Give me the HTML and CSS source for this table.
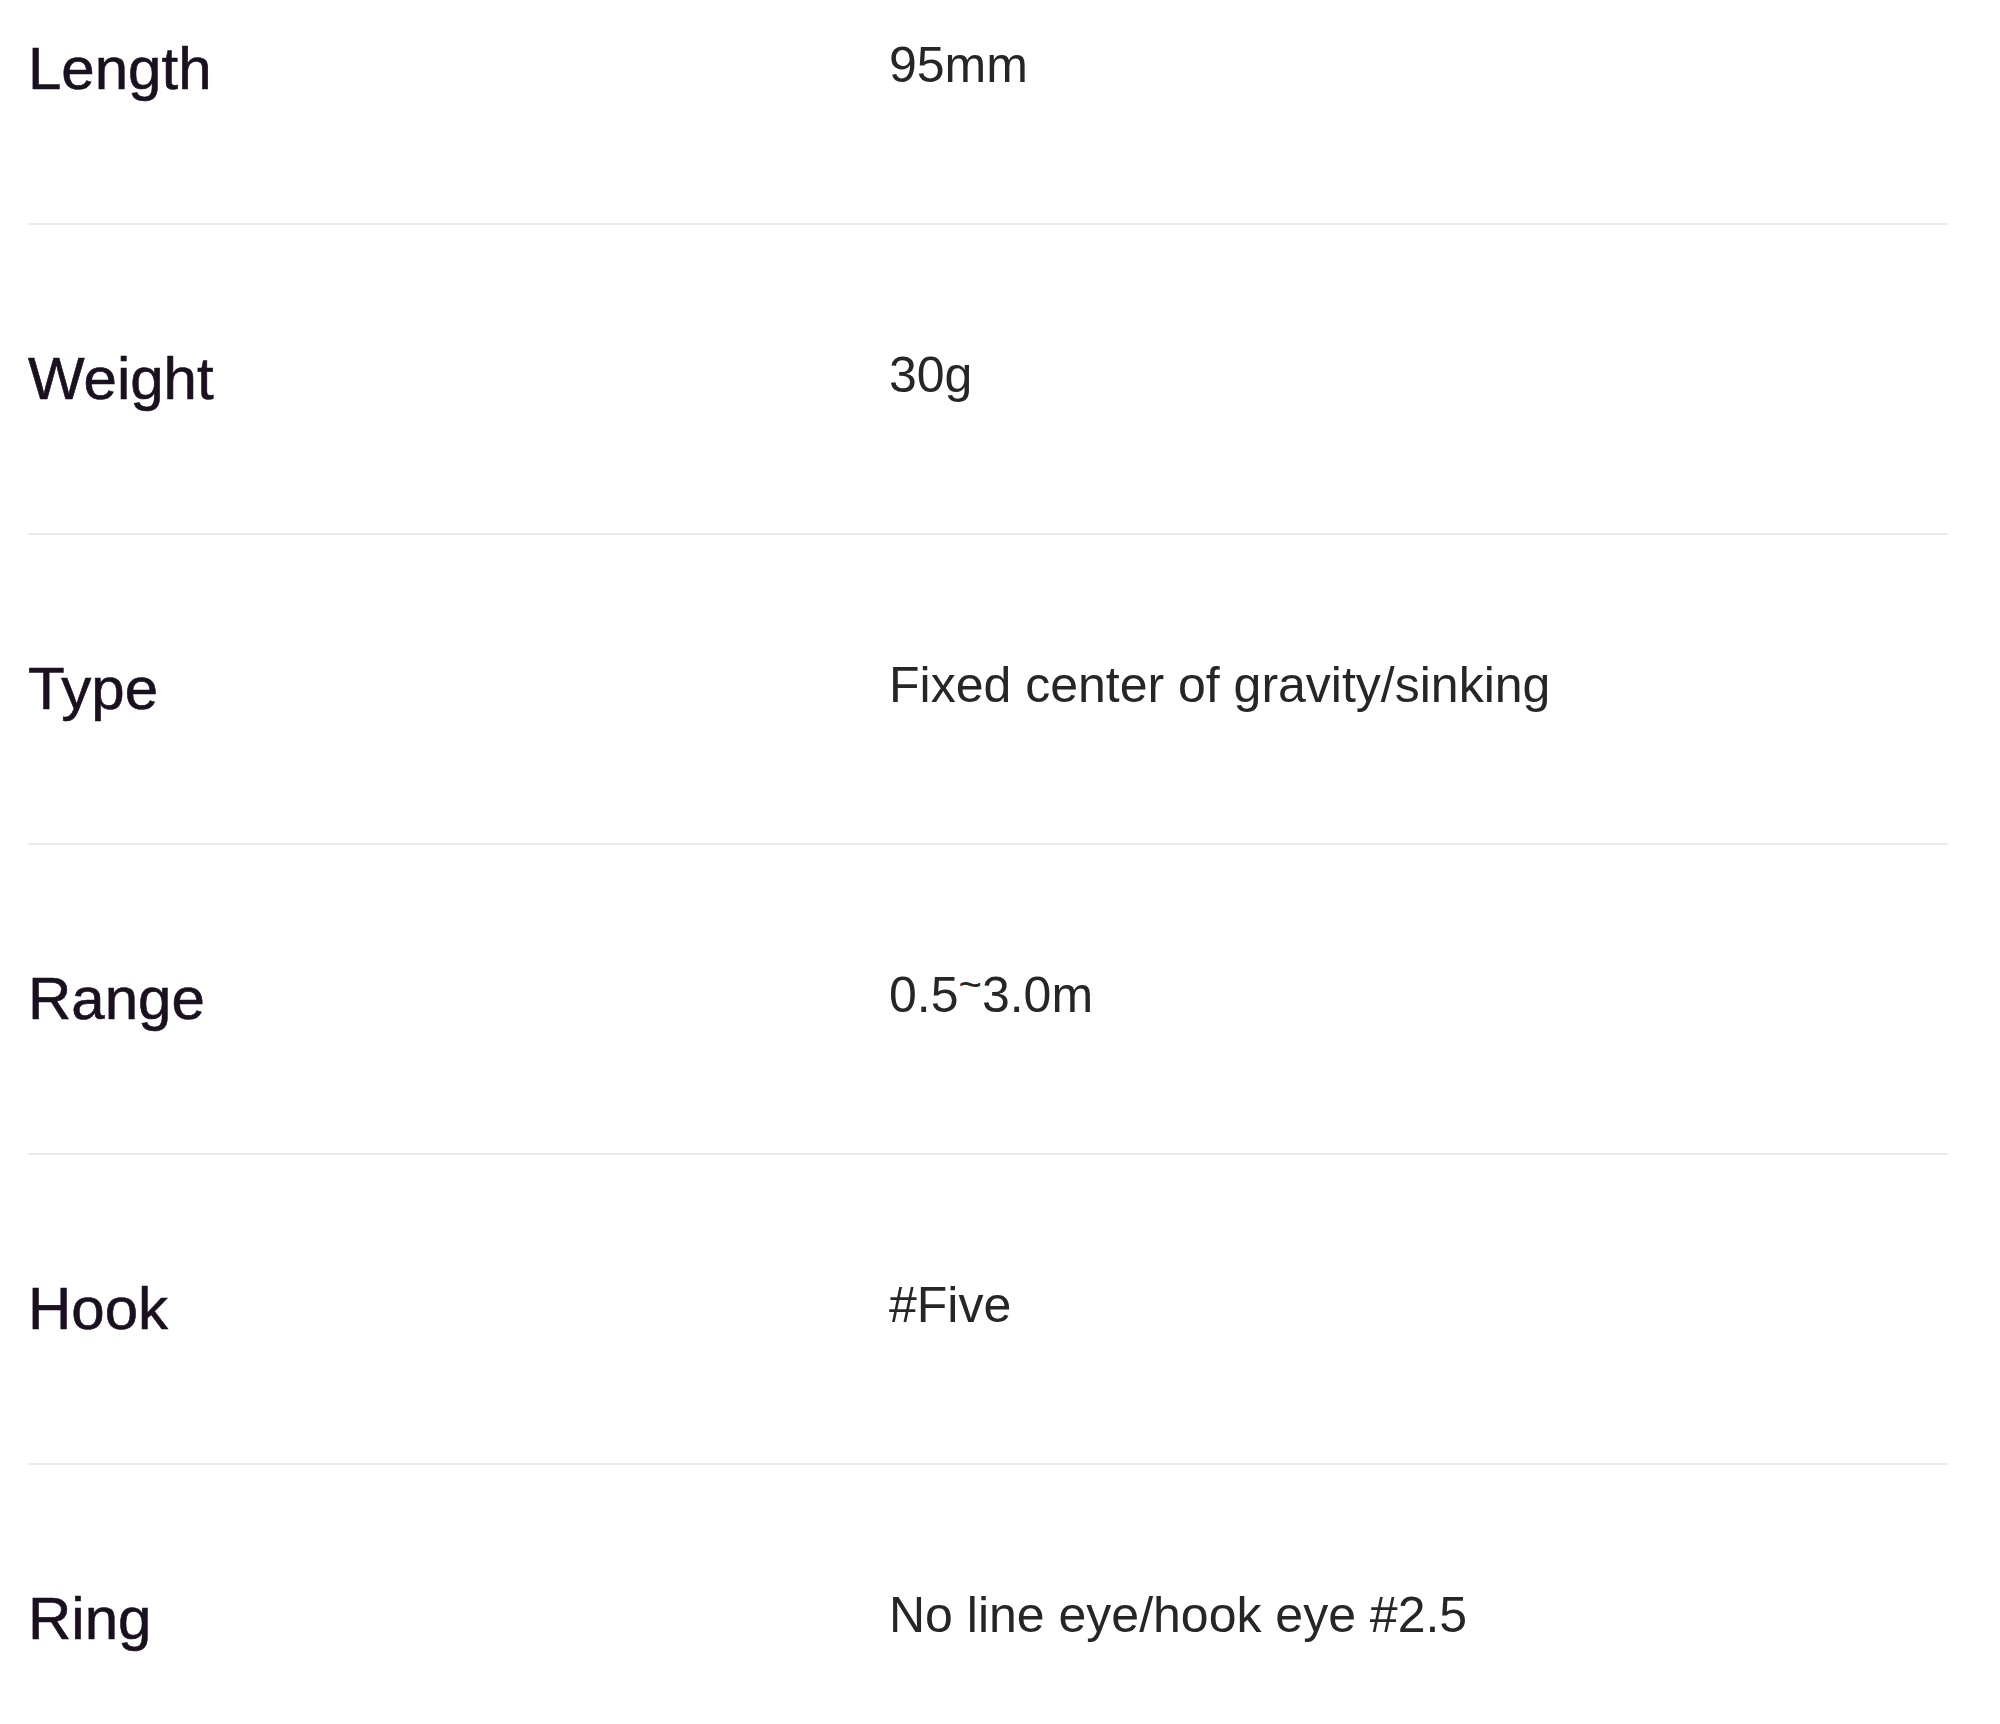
FILE: index.html
```html
<!DOCTYPE html>
<html lang="en">
<head>
<meta charset="utf-8">
<title>Specifications</title>
<link rel="stylesheet" href="styles.css">
</head>
<body>
<div class="spec">
  <div class="row"><div class="label">Length</div><div class="value">95mm</div></div>
  <div class="row"><div class="label">Weight</div><div class="value">30g</div></div>
  <div class="row"><div class="label">Type</div><div class="value">Fixed center of gravity/sinking</div></div>
  <div class="row"><div class="label">Range</div><div class="value">0.5<span class="tilde">~</span>3.0m</div></div>
  <div class="row"><div class="label">Hook</div><div class="value">#Five</div></div>
  <div class="row last"><div class="label">Ring</div><div class="value">No line eye/hook eye #2.5</div></div>
</div>
</body>
</html>
```
FILE: styles.css
```css
html, body {
  margin: 0;
  padding: 0;
  background: #ffffff;
}
body {
  font-family: "Liberation Sans", Arial, sans-serif;
  overflow: hidden;
}
.spec {
  margin: -85px 52px 0 28px;
  display: flex;
  flex-direction: column;
}
.row {
  display: grid;
  grid-template-columns: 861px 1fr;
  align-items: center;
  height: 308px;
  border-bottom: 2px solid #ebebeb;
}
.row.last {
  border-bottom: none;
}
.label {
  font-size: 60px;
  line-height: 1;
  color: #1a1020;
  -webkit-text-stroke: 0.6px #1a1020;
}
.value {
  font-size: 50px;
  line-height: 1;
  color: #262626;
  padding-bottom: 8px;
}
.tilde {
  display: inline-block;
  transform: translateY(-14px);
  font-size: 40px;
}
```
